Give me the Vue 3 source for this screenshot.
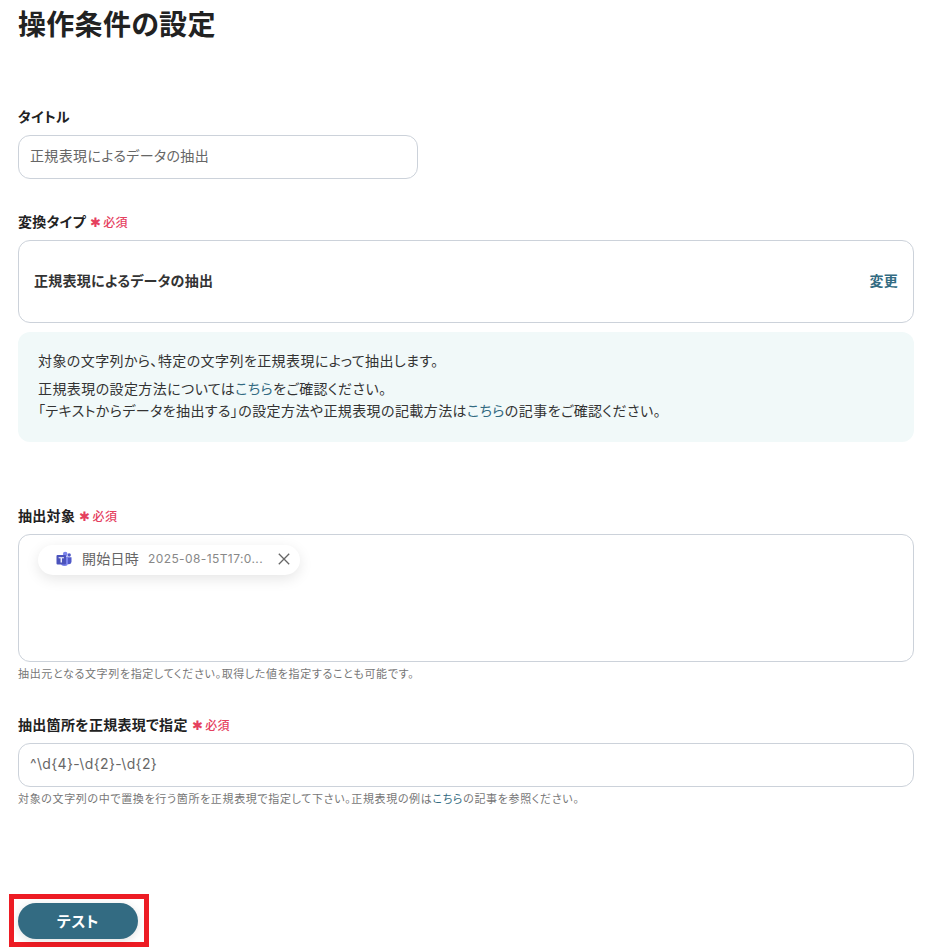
<script setup>
const changeLabel = '変更'
</script>

<template>
  <main class="page">
    <h1 class="title">操作条件の設定</h1>

    <section class="field first">
      <label class="label">タイトル</label>
      <div class="input short">正規表現によるデータの抽出</div>
    </section>

    <section class="field type">
      <label class="label">変換タイプ<span class="req"><i>✱</i>必須</span></label>
      <div class="select">
        <strong>正規表現によるデータの抽出</strong>
        <a class="change">{{ changeLabel }}</a>
      </div>
      <div class="info">
        <p>対象の文字列から、特定の文字列を正規表現によって抽出します。</p>
        <p>正規表現の設定方法については<a>こちら</a>をご確認ください。<br />「テキストからデータを抽出する」の設定方法や正規表現の記載方法は<a>こちら</a>の記事をご確認ください。</p>
      </div>
    </section>

    <section class="field target">
      <label class="label">抽出対象<span class="req"><i>✱</i>必須</span></label>
      <div class="area">
        <div class="chip">
          <svg class="teams" viewBox="0 0 16 16" width="16" height="16">
            <circle cx="9.2" cy="3" r="2.3" fill="#7b83eb" />
            <circle cx="13.2" cy="4" r="1.7" fill="#5059c9" />
            <path d="M10.5 6.2h5v4.6a2.4 2.4 0 0 1-2.4 2.4h-.6a2 2 0 0 1-2-2z" fill="#5059c9" />
            <path d="M5 5.6h7v6.4a3 3 0 0 1-3 3H8a3 3 0 0 1-3-3z" fill="#7b83eb" />
            <rect x="0.5" y="4" width="9.5" height="9.5" rx="1" fill="#4b53bc" />
            <path d="M2.6 6.2h5.3v1.1H5.9v4.3H4.6V7.3h-2z" fill="#fff" />
          </svg>
          <span class="chip-name">開始日時</span>
          <span class="chip-value">2025-08-15T17:0...</span>
          <svg class="close" viewBox="0 0 12 12" width="12" height="12">
            <path d="M.8.8l10.4 10.4M11.2.8L.8 11.2" stroke="#666" stroke-width="1.3" fill="none" />
          </svg>
        </div>
      </div>
      <p class="help">抽出元となる文字列を指定してください。取得した値を指定することも可能です。</p>
    </section>

    <section class="field regex">
      <label class="label">抽出箇所を正規表現で指定<span class="req"><i>✱</i>必須</span></label>
      <div class="input code">^\d{4}-\d{2}-\d{2}</div>
      <p class="help">対象の文字列の中で置換を行う箇所を正規表現で指定して下さい。正規表現の例は<a>こちら</a>の記事を参照ください。</p>
    </section>

    <div class="highlight">
      <button class="test" type="button">テスト</button>
    </div>
  </main>
</template>

<style scoped>
.page {
  box-sizing: border-box;
  width: 930px;
  height: 951px;
  padding: 0 16px 0 18px;
  overflow: hidden;
  background: #fff;
  color: #222;
  font-family: "Noto Sans CJK JP", "Noto Sans", sans-serif;
  font-feature-settings: "palt";
}
.title {
  margin: 0;
  height: 48px;
  font-size: 28px;
  line-height: 46px;
  font-weight: 700;
  letter-spacing: 0.3px;
  color: #222;
}
.field {
  display: flex;
  flex-direction: column;
}
.first { margin-top: 59px; }
.type { margin-top: 33px; }
.target { margin-top: 64px; }
.regex { margin-top: 34px; }
.label {
  box-sizing: border-box;
  display: flex;
  align-items: center;
  height: 20px;
  margin-bottom: 8px;
  padding-bottom: 2px;
  font-size: 14px;
  line-height: 18px;
  font-weight: 700;
  letter-spacing: 0.3px;
}
.req {
  display: inline-flex;
  align-items: center;
  margin-left: 4px;
  padding-top: 1px;
  font-size: 12px;
  font-weight: 500;
  letter-spacing: 0.4px;
  color: #e5405e;
}
.req i {
  margin-right: 2px;
  font-style: normal;
  font-size: 13px;
}
.input {
  box-sizing: border-box;
  display: flex;
  align-items: center;
  height: 44px;
  padding: 0 11px 4px;
  border: 1px solid #ccd2da;
  border-radius: 12px;
  font-size: 14px;
  letter-spacing: 0.35px;
  color: #666;
}
.code {
  font-family: Inter, "Noto Sans", sans-serif;
  letter-spacing: 0.35px;
}
.short { width: 400px; }
.select {
  box-sizing: border-box;
  display: flex;
  align-items: center;
  justify-content: space-between;
  height: 83px;
  padding: 0 15px 4px;
  border: 1px solid #ccd2da;
  border-radius: 12px;
  font-size: 14px;
  letter-spacing: 0.25px;
}
.select strong {
  font-weight: 700;
  color: #333;
}
.change {
  font-weight: 700;
  color: #336b82;
}
.info {
  box-sizing: border-box;
  height: 110px;
  margin-top: 9px;
  padding: 17px 20px;
  border-radius: 12px;
  background: #f1f9f9;
  font-size: 14px;
  line-height: 22px;
  letter-spacing: 0.41px;
  color: #333;
}
.info p { margin: 0 0 6px; }
a { color: #336b82; }
.area {
  box-sizing: border-box;
  height: 128px;
  padding: 10px 19px;
  border: 1px solid #ccd2da;
  border-radius: 12px;
}
.chip {
  box-sizing: border-box;
  display: flex;
  align-items: center;
  width: 262px;
  height: 30px;
  padding: 0 10px 2px 18px;
  border-radius: 15px;
  background: #fff;
  box-shadow: 0 4px 14px rgba(0, 0, 0, 0.1);
}
.teams { flex: none; }
.chip-name {
  margin: 0 0 2px 10px;
  font-size: 14px;
  letter-spacing: 0.25px;
  color: #666;
}
.chip-value {
  margin: 0 0 2px 9px;
  font-family: Inter, "Noto Sans", sans-serif;
  font-size: 12px;
  letter-spacing: 0.4px;
  color: #888;
  white-space: nowrap;
}
.close {
  flex: none;
  margin-left: auto;
}
.help {
  margin: 4px 0 1px;
  font-size: 11px;
  line-height: 14px;
  letter-spacing: 0.65px;
  color: #777;
}
.highlight {
  display: inline-flex;
  margin: 88px 0 0 -9px;
  padding: 4px 6px 3px 4px;
  border: 5px solid #ed1c24;
}
.test {
  width: 120px;
  height: 36px;
  padding: 0 0 2px;
  border: 0;
  border-radius: 18px;
  background: #336b82;
  box-shadow: 0 2px 8px rgba(0, 0, 0, 0.12);
  color: #fff;
  font: 700 15px "Noto Sans CJK JP", sans-serif;
  font-feature-settings: "palt";
  letter-spacing: 0.6px;
}
</style>
